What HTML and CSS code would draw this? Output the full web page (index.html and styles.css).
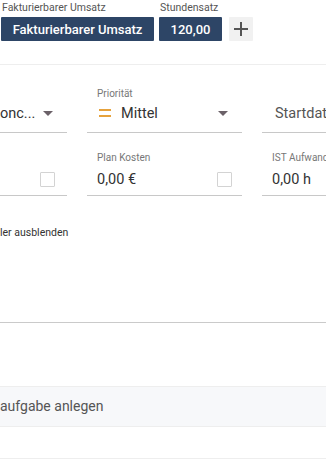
FILE: index.html
```html
<!DOCTYPE html>
<html lang="de">
<head>
<meta charset="utf-8">
<title>Aufgabe</title>
<link rel="stylesheet" href="styles.css">
</head>
<body>
<div class="page">
  <div class="billing">
    <div class="bgroup">
      <div class="blabel">Fakturierbarer Umsatz</div>
      <button class="chip wide">Fakturierbarer Umsatz</button>
    </div>
    <div class="bgroup">
      <div class="blabel">Stundensatz</div>
      <button class="chip rate">120,00</button>
    </div>
    <button class="add" aria-label="Hinzufügen">
      <svg width="14" height="14" viewBox="0 0 14 14"><path d="M7 0v14M0 7h14" stroke="#555" stroke-width="2"/></svg>
    </button>
  </div>
  <div class="divider"></div>

  <div class="grid row-a">
    <div class="field">
      <div class="flabel"></div>
      <div class="control"><span class="value clip">onc...</span><span class="caret"></span></div>
    </div>
    <div class="field">
      <div class="flabel">Priorität</div>
      <div class="control"><span class="prio"><i></i><i></i></span><span class="value grow">Mittel</span><span class="caret"></span></div>
    </div>
    <div class="field">
      <div class="flabel"></div>
      <div class="control"><span class="placeholder">Startdatum</span></div>
    </div>
  </div>

  <div class="grid row-b">
    <div class="field">
      <div class="flabel"></div>
      <div class="control end"><span class="check"></span></div>
    </div>
    <div class="field">
      <div class="flabel">Plan Kosten</div>
      <div class="control"><span class="value grow">0,00 €</span><span class="check"></span></div>
    </div>
    <div class="field">
      <div class="flabel">IST Aufwand</div>
      <div class="control"><span class="value grow">0,00 h</span></div>
    </div>
  </div>

  <div class="hide-link">ler ausblenden</div>
  <div class="editor-line"></div>
  <div class="subtask">aufgabe anlegen</div>
  <div class="list-line"></div>
</div>
</body>
</html>
```

FILE: styles.css
```css
html, body {
  margin: 0;
  padding: 0;
  background: #fff;
}
body {
  width: 326px;
  height: 469px;
  overflow: hidden;
  font-family: Roboto, "Liberation Sans", sans-serif;
  color: #333;
}
.page {
  width: 326px;
}
.billing {
  display: flex;
  align-items: flex-end;
  gap: 5px;
  padding: 1px 0 0 1px;
}
.bgroup {
  display: flex;
  flex-direction: column;
}
.blabel {
  font-size: 10.5px;
  line-height: 13px;
  color: #555;
  margin: 0 0 3px 1px;
  white-space: nowrap;
}
.chip {
  height: 24px;
  border: 0;
  border-radius: 1px;
  background: #2d4566;
  color: #fff;
  font-family: Roboto, "Liberation Sans", sans-serif;
  font-size: 13px;
  font-weight: 500;
  padding: 0;
  white-space: nowrap;
}
.chip.wide { width: 153px; }
.chip.rate { width: 63px; }
.add {
  width: 24px;
  height: 24px;
  margin-left: 2px;
  border: 0;
  border-radius: 1px;
  background: #f1f1f1;
  padding: 0;
  display: flex;
  align-items: center;
  justify-content: center;
}
.divider {
  height: 1px;
  background: #eeeeee;
  margin-top: 23px;
}
.grid {
  display: grid;
  grid-template-columns: 67px 155px 155px;
  column-gap: 20px;
}
.row-a { margin-top: 23px; }
.row-b { margin-top: 19px; }
.field {
  display: flex;
  flex-direction: column;
  border-bottom: 1px solid #c8c8c8;
  min-width: 0;
}
.grid .field:not(:first-child) .flabel,
.grid .field:not(:first-child) .control {
  padding-left: 10px;
}
.flabel {
  font-size: 10px;
  line-height: 12px;
  height: 12px;
  color: #777;
  white-space: nowrap;
}
.control {
  display: flex;
  align-items: center;
  height: 26px;
  font-size: 14.5px;
  white-space: nowrap;
}
.row-a .flabel { margin-bottom: 0; }
.row-a .control { margin-top: 0; margin-bottom: 6px; }
.row-b .control { margin-top: 2px; margin-bottom: 3px; }
.control.end { justify-content: flex-end; padding-right: 12px; }
.value { color: #333; }
.value.clip { flex: 1; }
.value.grow { flex: 1; }
.placeholder { color: #555; padding-left: 3px; }
.caret {
  width: 0;
  height: 0;
  border-left: 5px solid transparent;
  border-right: 5px solid transparent;
  border-top: 5px solid #6b6168;
  margin-right: 14px;
}
.prio {
  display: flex;
  flex-direction: column;
  gap: 4px;
  width: 12px;
  margin: 0 10px 0 2px;
}
.prio i {
  display: block;
  height: 2px;
  background: #e6a23c;
}
.check {
  width: 13px;
  height: 13px;
  border: 1px solid #d3d3d3;
  border-radius: 1px;
  margin-right: 10px;
}
.row-b .field:first-child .check { margin-right: 0; }
.hide-link {
  margin-top: 30px;
  font-size: 10.5px;
  line-height: 13px;
  color: #333;
}
.editor-line {
  height: 1px;
  background: #cacaca;
  margin-top: 83px;
}
.subtask {
  margin-top: 63px;
  height: 39px;
  line-height: 39px;
  background: #f7f8fa;
  border-top: 1px solid #eeeeee;
  border-bottom: 1px solid #eeeeee;
  font-size: 14px;
  color: #555;
}
.list-line {
  height: 1px;
  background: #eeeeee;
  margin-top: 31px;
}
```
